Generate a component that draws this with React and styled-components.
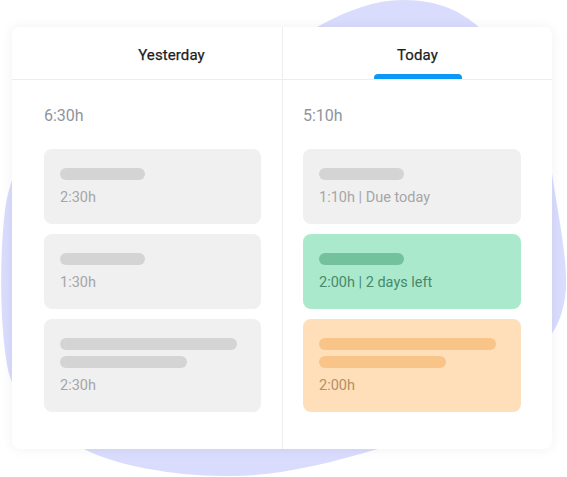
import React from "react";
import styled, { createGlobalStyle } from "styled-components";

const GlobalStyle = createGlobalStyle`
  html, body {
    margin: 0;
    padding: 0;
    background: #ffffff;
    font-family: Roboto, "Liberation Sans", sans-serif;
  }
`;

const Stage = styled.div`
  position: relative;
  width: 567px;
  height: 477px;
  padding: 27px 15px 0 12px;
  box-sizing: border-box;
  overflow: hidden;
`;

// lavender blob behind the board
const Blob = styled.svg`
  position: absolute;
  left: 0;
  top: 0;
  width: 567px;
  height: 477px;
`;

const Board = styled.div`
  position: relative;
  display: grid;
  grid-template-columns: 271px 1fr;
  grid-template-rows: 53px 1fr;
  width: 540px;
  height: 422px;
  background: #ffffff;
  border-radius: 8px;
  box-shadow: 0 0 12px 1px rgba(0, 0, 0, 0.05);
`;

const Tab = styled.div`
  position: relative;
  display: flex;
  align-items: center;
  justify-content: center;
  padding-left: ${(p) => p.$offset || 0}px;
  padding-top: 3px;
  border-bottom: 1px solid #ededed;
  border-right: ${(p) => (p.$divider ? "1px solid #ededed" : "none")};
  font-size: 15px;
  font-weight: 400;
  letter-spacing: 0.1px;
  color: #1c1e21;
  -webkit-text-stroke: 0.25px #1c1e21;

  ${(p) =>
    p.$active &&
    `
    &::after {
      content: "";
      position: absolute;
      bottom: 0;
      left: 50%;
      width: 88px;
      height: 5px;
      margin-left: -44px;
      border-radius: 4px 4px 0 0;
      background: #0a97f7;
    }
  `}
`;

const Column = styled.div`
  display: flex;
  flex-direction: column;
  padding: ${(p) => p.$pad};
  border-right: ${(p) => (p.$divider ? "1px solid #ededed" : "none")};
`;

const Total = styled.div`
  font-size: 16px;
  line-height: 20px;
  color: #8f949e;
  margin-bottom: 23px;
`;

const List = styled.div`
  display: flex;
  flex-direction: column;
  gap: 10px;
`;

const tones = {
  gray: { bg: "#f0f0f0", bar: "#d4d4d4", text: "#a6a6a6" },
  green: { bg: "#abe9cd", bar: "#74c19e", text: "#478a6a" },
  orange: { bg: "#fedfb9", bar: "#f9c487", text: "#b58f68" },
};

const Task = styled.div`
  display: flex;
  flex-direction: column;
  gap: 6px;
  padding: 19px 16px 16px;
  border-radius: 8px;
  background: ${(p) => tones[p.$tone].bg};
`;

const Bar = styled.div`
  width: ${(p) => p.$w}px;
  height: 12px;
  border-radius: 6px;
  background: ${(p) => tones[p.$tone].bar};
`;

const Meta = styled.div`
  margin-top: 2px;
  font-size: 14.5px;
  line-height: 20px;
  color: ${(p) => tones[p.$tone].text};
`;

function TaskCard({ tone, bars, meta }) {
  return (
    <Task $tone={tone}>
      {bars.map((w, i) => (
        <Bar key={i} $tone={tone} $w={w} />
      ))}
      <Meta $tone={tone}>{meta}</Meta>
    </Task>
  );
}

export default function App() {
  return (
    <Stage>
      <GlobalStyle />
      <Blob viewBox="0 0 567 477">
        <path
          fill="#d9dcfd"
          d="M403 0 C440 0 462 12 480 28 C520 62 546 118 552 173 C558 215 567 255 566 288 C564 315 556 328 548 340 C520 390 450 432 378 449 C320 466 270 477 225 476 C170 476 112 464 84 449 C40 425 15 400 8 370 C0 330 -1 260 5 210 C12 160 40 120 100 90 C170 60 260 55 317 27 C348 10 375 0 403 0 Z"
        />
      </Blob>
      <Board>
        <Tab $divider $offset={49}>Yesterday</Tab>
        <Tab $active>Today</Tab>
        <Column $divider $pad="26px 21px 0 32px">
          <Total>6:30h</Total>
          <List>
            <TaskCard tone="gray" bars={[85]} meta="2:30h" />
            <TaskCard tone="gray" bars={[85]} meta="1:30h" />
            <TaskCard tone="gray" bars={[177, 127]} meta="2:30h" />
          </List>
        </Column>
        <Column $pad="26px 31px 0 20px">
          <Total>5:10h</Total>
          <List>
            <TaskCard tone="gray" bars={[85]} meta="1:10h | Due today" />
            <TaskCard tone="green" bars={[85]} meta="2:00h | 2 days left" />
            <TaskCard tone="orange" bars={[177, 127]} meta="2:00h" />
          </List>
        </Column>
      </Board>
    </Stage>
  );
}
